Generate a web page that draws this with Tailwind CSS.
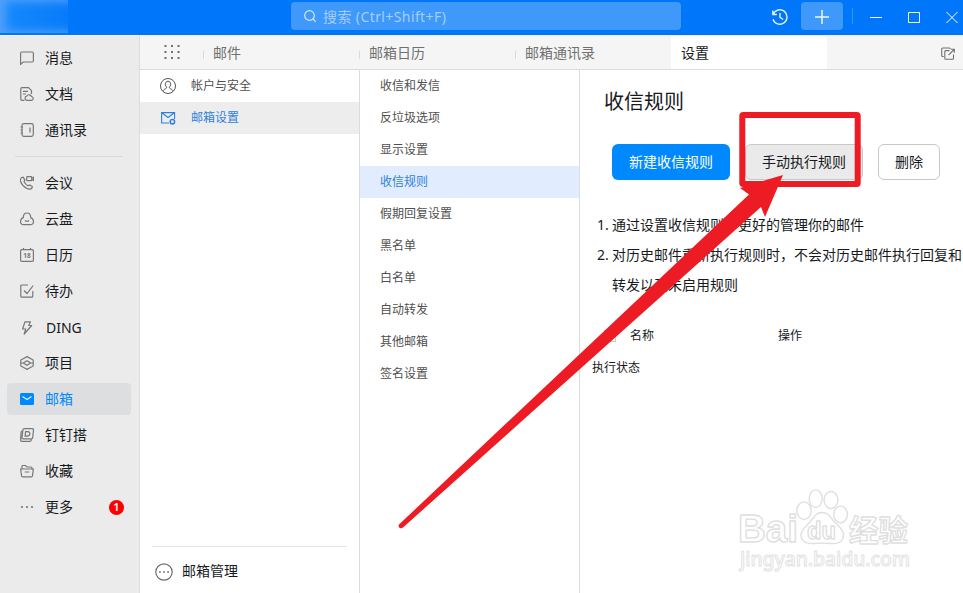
<!DOCTYPE html>
<html lang="zh-CN">
<head>
    <meta charset="UTF-8">
    <meta name="viewport" content="width=device-width, initial-scale=1.0">
    <title>邮箱设置</title>
    <script src="https://cdn.jsdelivr.net/npm/@tailwindcss/browser@4"></script>
</head>
<body class="relative flex h-[593px] w-[963px] flex-col overflow-hidden bg-white font-['Noto_Sans','Noto_Sans_CJK_SC',sans-serif] text-sm text-[#171a1d]">
    <!-- Title bar -->
    <header class="flex h-[35px] shrink-0 items-start bg-[#0077fa] text-white">
        <div class="h-[33px] w-[68px] overflow-hidden bg-[#4fa0fa]">
            <div class="ml-1.5 mt-0.5 h-[29px] w-[80px] bg-linear-to-r from-[#1688fb] to-[#0377fa] blur-[4px]"></div>
        </div>
        <div class="ml-[223px] mt-0.5 flex h-7 w-[390px] items-center rounded bg-[#3f99fb] pl-[13px] text-[#a5cefd]">
            <svg class="mr-[7px] h-3 w-3" viewBox="0 0 12 12" fill="none" stroke="#d5e8fe" stroke-width="1.2"><circle cx="5.5" cy="5.5" r="4.8"/><path d="M9 9l2.8 2.8"/></svg>
            <span class="pt-px text-sm tracking-[0.4px]">搜索 (Ctrl+Shift+F)</span>
        </div>
        <svg class="ml-[91px] mt-[9px] h-4 w-4" viewBox="0 0 16 16" fill="none" stroke="#e4f0ff" stroke-width="1.4"><path d="M.8 1.5v4h4M1.2 5.2A7.2 7.2 0 1 1 1 10.2M8 4v4.3l3.2 2.2"/></svg>
        <button class="ml-[13px] mt-0.5 flex h-7 w-[42px] items-center justify-center rounded bg-[#3f99fb]">
            <svg class="mt-px h-4 w-4" viewBox="0 0 16 16" stroke="#eef6ff" stroke-width="1.5"><path d="M8 1v14M1 8h14"/></svg>
        </button>
        <div class="ml-[9px] mt-2 h-4 w-px bg-[#3a94fb]"></div>
        <svg class="ml-[17px] mt-[11px] h-3 w-3" viewBox="0 0 12 12" stroke="#fff"><path d="M0 6.5h12"/></svg>
        <svg class="ml-[26px] mt-[11px] h-3 w-3" viewBox="0 0 12 12" fill="none" stroke="#fff"><path d="M.5 1.5h11v10H.5z"/></svg>
        <svg class="ml-[26px] mt-[11px] h-3 w-3" viewBox="0 0 12 12" stroke="#fff"><path d="M.5 1l11 11M11.5 1L.5 12"/></svg>
    </header>

    <div class="flex min-h-0 flex-1">
        <!-- Sidebar -->
        <aside class="w-[140px] shrink-0 border-r border-t border-r-[#dcdcdc] border-t-[#f3f3f3] bg-[#ebebeb] pt-1">
            <nav>
                <a class="flex h-9 items-center pl-5"><svg class="mr-[11px] h-3.5 w-3.5" viewBox="0 0 14 14" fill="none" stroke="#757779" stroke-width="1.2"><path d="M.6 13.4V2.2Q.6 1 1.8 1h10.4q1.2 0 1.2 1.2v7.6q0 1.2-1.2 1.2H3.2z"/></svg>消息</a>
                <a class="flex h-9 items-center pl-5"><svg class="mr-[11px] h-3.5 w-3.5" viewBox="0 0 14 14" fill="none" stroke="#757779" stroke-width="1.2"><path d="M4.5 13.3H2Q.8 13.3.8 12V2Q.8.7 2 .7h6.5l3 3V7M3 4.3h5M3 7h3"/><path d="M6.8 13.3a2.1 2.1 0 0 1-.2-4.1 2.7 2.7 0 0 1 4.9.3 2 2 0 0 1 .5 3.8z"/></svg>文档</a>
                <a class="flex h-9 items-center pl-5"><svg class="mr-[11px] h-3.5 w-3.5" viewBox="0 0 14 14" fill="none" stroke="#757779" stroke-width="1.2"><rect x="2" y=".7" width="11.3" height="12.6" rx="1.8"/><path d="M.5 4h2.500M.5 7h2M.5 10h2.500M10 4.500v5"/></svg>通讯录</a>
                <div class="my-2 ml-[15px] mr-4 h-px bg-[#d9dadb]"></div>
                <a class="flex h-9 items-center pl-5"><svg class="mr-[11px] h-3.5 w-3.5" viewBox="0 0 14 14" fill="none" stroke="#757779" stroke-width="1.2"><path d="M1.8 1.5l1.4-.4 1.7 3-.9 1.5q1.2 2.8 4 4.2l1.6-.9 2.7 1.7q-.2 2.4-2.3 2.6C5 13-.9 6.7.7 2.8q.3-.9 1.1-1.3z"/><rect x="6.7" y=".7" width="5" height="4" rx=".7"/><path d="M11.7 2.300l1.800-1v3.300l-1.800-1"/></svg>会议</a>
                <a class="flex h-9 items-center pl-5"><svg class="mr-[11px] h-3.5 w-3.5" viewBox="0 0 14 14" fill="none" stroke="#757779" stroke-width="1.2"><path d="M3.3 5.6C3.3 2.8 4.8 1 7 1s3.7 1.8 3.7 4.6c2 .8 2.8 2.3 2.8 3.9 0 2-1.3 3.2-3.3 3.2H3.8C1.8 12.7.5 11.5.5 9.5c0-1.6.8-3.1 2.8-3.900zM4.9 8.500q2.100 1.500 4.200 0"/></svg>云盘</a>
                <a class="flex h-9 items-center pl-5"><svg class="mr-[11px] h-3.5 w-3.5" viewBox="0 0 14 14" fill="none" stroke="#757779" stroke-width="1.2"><rect x=".6" y="1.6" width="12.8" height="11.800" rx="1.2"/><path d="M3.5 0v2M10.5 0v2"/><text x="7" y="10" text-anchor="middle" font-size="6.5" font-weight="700" fill="#757779" stroke="none">18</text></svg>日历</a>
                <a class="flex h-9 items-center pl-5"><svg class="mr-[11px] h-3.5 w-3.5" viewBox="0 0 14 14" fill="none" stroke="#757779" stroke-width="1.2"><path d="M8 1H1.8Q.8 1 .8 2v10.2q0 1 1 1h10q1 0 1-1V7M4 6.5l3 3 6.2-8"/></svg>待办</a>
                <a class="flex h-9 items-center pl-5 pt-px"><svg class="mr-3 h-3.5 w-3.5" viewBox="0 0 14 14" fill="none" stroke="#757779" stroke-width="1.2" stroke-linejoin="round"><path d="M5 .8h5.5L8.7 4.5h3L4.2 13l1.5-5H2.6z"/></svg>DING</a>
                <a class="flex h-9 items-center pl-5"><svg class="mr-[11px] h-3.5 w-3.5" viewBox="0 0 14 14" fill="none" stroke="#757779" stroke-width="1.2"><path d="M7 .6l6.2 3.400v6L7 13.400.8 10V4zM.8 7h2.500L7 4.700 10.700 7 7 9.300 3.300 7M10.700 7h2.500"/></svg>项目</a>
                <a class="mx-[7px] my-0.5 flex h-8 w-[124px] items-center rounded bg-[#dddee0] pl-[13px] text-[#0089ff]"><svg class="mr-[11px] h-3.5 w-3.5" viewBox="0 0 14 14"><rect y="1" width="14" height="12" rx="1.5" fill="#0089ff"/><path d="M2.5 4.5L7 7.6l4.5-3.1" fill="none" stroke="#e5f0fa" stroke-width="1.2"/></svg>邮箱</a>
                <a class="flex h-9 items-center pl-5"><svg class="mr-[11px] h-3.5 w-3.5" viewBox="0 0 14 14" fill="none" stroke="#757779" stroke-width="1.2"><path d="M4.500.7h7.800q1.300 0 1.200 1.300l-.8 7.700q-.1 1.200-1.300 1.200H3.200Q1.900 10.900 2 9.700l.9-7.700Q3 .7 4.500.7zM2.700 3H2Q1.200 3 1.100 4L.6 12q0 1.300 1.200 1.300h8.200q1 0 1.200-1l.2-1.200M5.600 3.700h2.300c3 0 2.300 4.400-.7 4.400H5.100z"/></svg>钉钉搭</a>
                <a class="flex h-9 items-center pl-5"><svg class="mr-[11px] h-3.5 w-3.5" viewBox="0 0 14 14" fill="none" stroke="#757779" stroke-width="1.2"><path d="M2 5V2.5q0-1 1-1h2.5L7 3h4q1 0 1 1v1M.7 5h12.6l-.8 6.8q-.1 1.1-1.2 1.1H2.7q-1.1 0-1.2-1.1zM4.7 8h4.6"/></svg>收藏</a>
                <a class="flex h-9 items-center pl-5"><svg class="mr-[11px] h-3.5 w-3.5" viewBox="0 0 14 14" fill="#757779"><circle cx="2" cy="7" r="1.1"/><circle cx="7" cy="7" r="1.1"/><circle cx="12" cy="7" r="1.1"/></svg>更多<span class="ml-auto mr-[15px] flex h-[15px] w-[15px] items-center justify-center rounded-full bg-[#ff0000] text-[11px] font-semibold text-white">1</span></a>
            </nav>
        </aside>

        <div class="flex min-w-0 flex-1 flex-col">
            <!-- Tabs -->
            <div class="flex h-[35px] shrink-0 border-b border-t border-b-[#dcdcdc] border-t-[#eee] bg-[#f5f5f5] text-[#707070]">
                <div class="flex w-[63px] items-center pb-0.5 pl-6">
                    <svg class="h-4 w-4" viewBox="0 0 16 16" fill="#707070"><path d="M.5 1h2v2h-2zM7 1h2v2H7zM13.5 1h2v2h-2zM.5 7h2v2h-2zM7 7h2v2H7zM13.5 7h2v2h-2zM.5 13h2v2h-2zM7 13h2v2H7zM13.5 13h2v2h-2z"/></svg>
                </div>
                <div class="flex w-[156px] items-center"><i class="mr-[9px] mt-1 h-2 w-px bg-[#dadada]"></i>邮件</div>
                <div class="flex w-[156px] items-center"><i class="mr-[9px] mt-1 h-2 w-px bg-[#dadada]"></i>邮箱日历</div>
                <div class="flex w-[156px] items-center"><i class="mr-[9px] mt-1 h-2 w-px bg-[#dadada]"></i>邮箱通讯录</div>
                <div class="flex w-[156px] items-center rounded-tr bg-white pl-2.5 text-[#171a1d]">设置</div>
                <svg class="ml-auto mr-2 mt-[11px] h-3.5 w-3.5" viewBox="0 0 14 14" fill="none" stroke="#707070" stroke-width="1.1"><path d="M2.8 9.5H1.7q-1 0-1-1V2q0-1 1-1h6.5q1 0 1 1M8.5 3.6H4.8q-1 0-1 1v6.7q0 1 1 1h6.7q1 0 1-1V7.5M7.5 8.2l5.7-5.7M9.8 2.3h3.5v3.5"/></svg>
            </div>

            <div class="flex min-h-0 flex-1">
                <!-- Settings groups -->
                <div class="flex w-[220px] shrink-0 flex-col border-r border-[#dcdcdc] text-xs text-[#505050]">
                    <div class="flex h-8 items-center pl-5">
                        <svg class="mr-[15px] h-4 w-4" viewBox="0 0 16 16" fill="none" stroke="#555"><circle cx="8" cy="8" r="7.5"/><path d="M8 3.3c-1.900 0-2.700 1.400-2.700 2.900 0 1.200.5 2.300 1.300 2.900.3.900-.4 1.300-1.200 1.700-1.300.6-1.900 1-2.200 2.300M8 3.300c1.900 0 2.700 1.400 2.700 2.900 0 1.200-.5 2.300-1.300 2.900-.3.900.4 1.300 1.200 1.700 1.300.6 1.900 1 2.200 2.300"/></svg>帐户与安全
                    </div>
                    <div class="flex h-8 items-center bg-[#ededed] pl-[21px] text-[#2f80dd]">
                        <svg class="mr-[15px] h-3.5 w-[15px]" viewBox="0 0 15 14" fill="none" stroke="#2f80dd" stroke-width="1.1"><path d="M8 12H.6V1.6h13V8M.8 1.8L7 6.5l6.4-4.7"/><circle cx="11.4" cy="10.8" r="2.2" stroke-width="1.5"/></svg>邮箱设置
                    </div>
                    <div class="mx-3 mt-auto h-px bg-[#e5e5e5]"></div>
                    <div class="flex h-[46px] items-center pl-[15px] pt-[3px] text-sm text-[#171a1d]">
                        <svg class="mr-[9px] h-[18px] w-[18px]" viewBox="0 0 18 18" fill="none" stroke="#707070" stroke-width="1.2"><circle cx="9" cy="9" r="8.2"/><path d="M4 9h1.800M8.100 9h1.800M12.200 9h1.800" stroke-width="1.5"/></svg><span class="-mt-0.5">邮箱管理</span>
                    </div>
                </div>

                <!-- Settings list -->
                <ul class="w-[220px] shrink-0 border-r border-[#dcdcdc] text-xs leading-8 text-[#505050]">
                    <li class="h-8 pl-5">收信和发信</li>
                    <li class="h-8 pl-5">反垃圾选项</li>
                    <li class="h-8 pl-5">显示设置</li>
                    <li class="h-8 bg-[#e1edfe] pl-5 text-[#2f80dd]">收信规则</li>
                    <li class="h-8 pl-5">假期回复设置</li>
                    <li class="h-8 pl-5">黑名单</li>
                    <li class="h-8 pl-5">白名单</li>
                    <li class="h-8 pl-5">自动转发</li>
                    <li class="h-8 pl-5">其他邮箱</li>
                    <li class="h-8 pl-5">签名设置</li>
                </ul>

                <!-- Mail rules -->
                <main class="min-w-0 flex-1">
                    <h1 class="mt-4 pl-6 text-xl leading-8">收信规则</h1>
                    <div class="mt-[26px] flex h-9 pl-8">
                        <button class="w-[118px] rounded-md bg-[#0089ff] text-white">新建收信规则</button>
                        <button class="ml-[15px] w-[118px] rounded-md border border-[#c8c8c8] bg-[#eaeaea]">手动执行规则</button>
                        <button class="ml-[15px] w-[62px] rounded-md border border-[#c8c8c8] bg-white">删除</button>
                    </div>
                    <ol class="mt-[30px] list-none pl-[17px] text-sm leading-[30px]">
                        <li class="flex"><span class="w-[15px] shrink-0">1.</span><span class="whitespace-nowrap">通过设置收信规则，更好的管理你的邮件</span></li>
                        <li class="flex"><span class="w-[15px] shrink-0">2.</span><span class="whitespace-nowrap">对历史邮件重新执行规则时，不会对历史邮件执行回复和<br>转发以及未启用规则</span></li>
                    </ol>
                    <div class="mt-5 flex h-8 items-center pl-6 text-xs">
                        <i class="mr-[14px] h-3 w-3 border border-[#ccc]"></i>
                        <span class="w-[148px]">名称</span>
                        <span>操作</span>
                    </div>
                    <div class="h-8 pl-3 text-xs leading-8">执行状态</div>
                </main>
            </div>
        </div>
    </div>

    <!-- Watermark -->
    <svg class="absolute left-[730px] top-[480px] h-[100px] w-[190px]" viewBox="0 0 190 100" fill="#fff" stroke="#dfdfdf" stroke-width="1.4" stroke-linejoin="round">
        <text x="8" y="62" textLength="60" lengthAdjust="spacingAndGlyphs" font-family="Liberation Sans" font-size="38" font-weight="700">Bai</text>
        <ellipse cx="74" cy="30.7" rx="7.2" ry="8.8"/>
        <ellipse cx="85.7" cy="18.7" rx="6.5" ry="8.8"/>
        <ellipse cx="101" cy="20" rx="7" ry="8.5"/>
        <ellipse cx="110.6" cy="34.4" rx="6.8" ry="8.3"/>
        <path d="M92 32.5c7 0 9 6 13 10 5 5 9 8 8.5 13.5-.5 6-6 8-12 7.5-7-.6-12-.6-18 0-7 .6-12.500-2-12.500-8.500 0-5 4-8 8.500-12.500s6-10 12.500-10z"/>
        <text x="77" y="59" textLength="29" lengthAdjust="spacingAndGlyphs" font-family="Liberation Sans" font-size="24" font-weight="700">du</text>
        <text x="119" y="60.500" textLength="59" lengthAdjust="spacingAndGlyphs" font-size="30" font-weight="700">经验</text>
        <text x="10" y="86" textLength="170" lengthAdjust="spacingAndGlyphs" font-size="20" font-weight="500" stroke="#e2e2e2" stroke-width="1">jingyan.baidu.com</text>
    </svg>

    <!-- Red highlight box and arrow -->
    <svg class="absolute left-0 top-0 h-[593px] w-[963px]" viewBox="0 0 963 593">
        <rect x="742.3" y="115" width="115.4" height="69" rx="1" fill="none" stroke="#ed1c24" stroke-width="6"/>
        <path d="M399 524.5L749 194.5 740 188l43-13-18 42-4-10L403 527.5Q401 529 399.5 527.8T399 524.5z" fill="#ed1c24"/>
    </svg>
</body>
</html>
